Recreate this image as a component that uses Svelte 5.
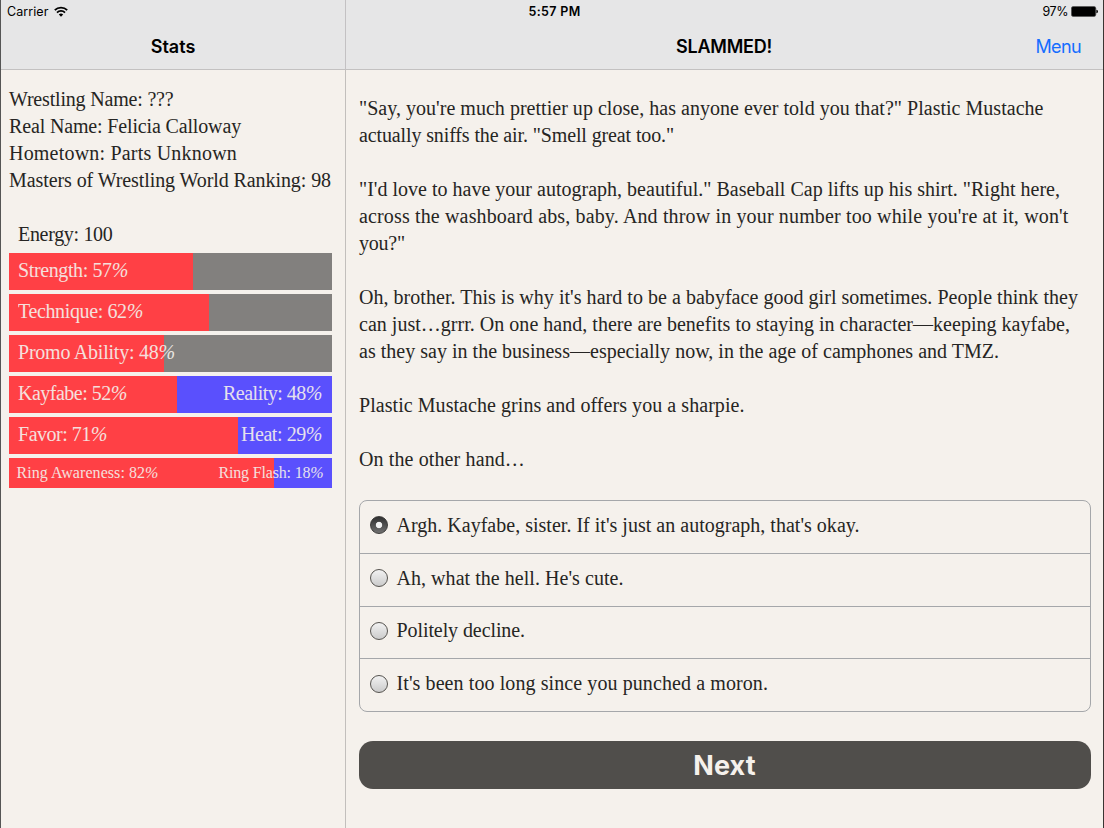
<script>
  const profile = [
    { text: 'Wrestling Name: ???', width: 164.5 },
    { text: 'Real Name: Felicia Calloway', width: 232 },
    { text: 'Hometown: Parts Unknown', width: 228 },
    { text: 'Masters of Wrestling World Ranking: 98', width: 322 }
  ];

  const bars = [
    { name: 'Strength', value: 57, width: 110 },
    { name: 'Technique', value: 62, width: 125 },
    { name: 'Promo Ability', value: 48, width: 157 },
    { name: 'Kayfabe', value: 52, width: 109, opposite: 'Reality', oppositeWidth: 99 },
    { name: 'Favor', value: 71, width: 89, opposite: 'Heat', oppositeWidth: 81 },
    { name: 'Ring Awareness', value: 82, width: 142, opposite: 'Ring Flash', oppositeWidth: 105, small: true }
  ];

  const story = [
    [
      { text: `"Say, you're much prettier up close, has anyone ever told you that?" Plastic Mustache`, width: 684.5 },
      { text: `actually sniffs the air. "Smell great too."`, width: 315 }
    ],
    [
      { text: `"I'd love to have your autograph, beautiful." Baseball Cap lifts up his shirt. "Right here,`, width: 701 },
      { text: `across the washboard abs, baby. And throw in your number too while you're at it, won't`, width: 709.5 },
      { text: `you?"`, width: 46 }
    ],
    [
      { text: `Oh, brother. This is why it's hard to be a babyface good girl sometimes. People think they`, width: 719 },
      { text: `can just…grrr. On one hand, there are benefits to staying in character—keeping kayfabe,`, width: 711 },
      { text: `as they say in the business—especially now, in the age of camphones and TMZ.`, width: 640 }
    ],
    [{ text: 'Plastic Mustache grins and offers you a sharpie.', width: 385.5 }],
    [{ text: 'On the other hand…', width: 166 }]
  ];

  const options = [
    { text: `Argh. Kayfabe, sister. If it's just an autograph, that's okay.`, width: 463 },
    { text: `Ah, what the hell. He's cute.`, width: 227 },
    { text: 'Politely decline.', width: 128.5 },
    { text: `It's been too long since you punched a moron.`, width: 371.5 }
  ];

  let selected = $state(0);

  // spread the letters so that the text takes the given width
  function fit(node, width) {
    const natural = node.getBoundingClientRect().width;
    node.style.letterSpacing = (width - natural) / node.textContent.length + 'px';
  }
</script>

<div class="screen">
  <header>
    <div class="status">
      <div class="carrier">
        <span use:fit={41.5}>Carrier</span>
        <svg width="14" height="11" viewBox="0 0 14 11" fill="none" stroke="#000" stroke-width="1.8">
          <path d="M.8 4.1a8.8 8.8 0 0 1 12.4 0" />
          <path d="M3 6.6a5.6 5.6 0 0 1 8 0" />
          <path d="M7 10.8 4.8 8.5a3.1 3.1 0 0 1 4.4 0z" fill="#000" stroke="none" />
        </svg>
      </div>
      <div class="time"><span use:fit={52}>5:57 PM</span></div>
      <div class="battery">
        <span use:fit={25.5}>97%</span>
        <svg width="27" height="11" viewBox="0 0 27 11">
          <rect x=".4" y=".5" width="24.4" height="10" rx="1.8" fill="#000" stroke="#555" stroke-width=".7" />
          <path d="M25.4 3.8q1.6.2 1.6 1.7t-1.6 1.7z" />
        </svg>
      </div>
    </div>
    <div class="nav">
      <h1 class="left"><span use:fit={44.5}>Stats</span></h1>
      <h1 class="right"><span use:fit={96}>SLAMMED!</span></h1>
      <button class="menu"><span use:fit={45.5}>Menu</span></button>
    </div>
  </header>

  <div class="panes">
    <aside>
      {#each profile as line}
        <div class="line"><span use:fit={line.width}>{line.text}</span></div>
      {/each}
      <div class="line energy"><span use:fit={94.5}>Energy: 100</span></div>

      <div class="bars">
        {#each bars as bar}
          <div class="bar" class:opposed={bar.opposite} class:small={bar.small}>
            <div class="fill" style="width: {bar.value}%"></div>
            <div class="labels">
              <span use:fit={bar.width}>{bar.name}: {bar.value}<i>%</i></span>
              {#if bar.opposite}
                <span use:fit={bar.oppositeWidth}>{bar.opposite}: {100 - bar.value}<i>%</i></span>
              {/if}
            </div>
          </div>
        {/each}
      </div>
    </aside>

    <main>
      {#each story as paragraph}
        <p>
          {#each paragraph as line}
            <span class="line"><span use:fit={line.width}>{line.text}</span></span>
          {/each}
        </p>
      {/each}

      <div class="options">
        {#each options as option, i}
          <label>
            <input type="radio" name="choice" value={i} bind:group={selected} />
            <span use:fit={option.width}>{option.text}</span>
          </label>
        {/each}
      </div>

      <button class="next"><span use:fit={62.5}>Next</span></button>
    </main>
  </div>
</div>

<style>
  :global(body) {
    margin: 0;
    background: #f5f1ec;
  }
  .screen {
    box-sizing: border-box;
    display: flex;
    flex-direction: column;
    width: 1104px;
    height: 828px;
    overflow: hidden;
    border-left: 1px solid #555;
    border-right: 1px solid #3a3532;
    background: #f5f1ec;
    color: #262523;
    font-family: Palatino, "Liberation Serif", serif;
    font-size: 20px;
    line-height: 27px;
    white-space: nowrap;
  }
  header {
    box-sizing: border-box;
    height: 70px;
    border-bottom: 1px solid #c3c1c1;
    background: linear-gradient(to right, transparent 344px, #c3c1c3 344px, #c3c1c3 345px, transparent 345px), #e6e6e7;
    color: #000;
    font-family: Inter, sans-serif;
  }
  .status {
    display: grid;
    grid-template-columns: 1fr auto 1fr;
    height: 23px;
    line-height: 23px;
    font-size: 12.5px;
  }
  .carrier,
  .battery {
    display: flex;
    align-items: center;
  }
  .carrier {
    gap: 5px;
    padding-left: 6px;
  }
  .battery {
    justify-content: flex-end;
    gap: 3px;
    padding-right: 5px;
  }
  .time {
    padding-left: 5px;
    font-weight: 600;
  }
  .nav {
    display: grid;
    grid-template-columns: 344px 1fr;
    align-items: center;
    height: 46px;
  }
  h1 {
    grid-row: 1;
    margin: 0;
    font-size: 18px;
    font-weight: 600;
    text-align: center;
  }
  .menu {
    grid-row: 1;
    grid-column: 2;
    justify-self: end;
    margin-right: 22px;
    padding: 0;
    border: 0;
    background: none;
    color: #156dff;
    font: 18px/27px Inter, sans-serif;
  }
  .right {
    grid-column: 2;
  }
  .panes {
    display: flex;
    flex: 1;
  }
  aside {
    box-sizing: border-box;
    width: 345px;
    padding: 16px 13px 0 8px;
    border-right: 1px solid #c2bfbc;
  }
  .line {
    display: block;
  }
  .energy {
    margin-top: 27px;
    padding-left: 9px;
  }
  .bars {
    display: flex;
    flex-direction: column;
    gap: 4px;
    margin-top: 5px;
  }
  .bar {
    position: relative;
    height: 37px;
    background: #82807e;
    color: #f5f1ec;
  }
  .opposed {
    background: #5a50fd;
  }
  .fill {
    height: 100%;
    background: #ff4045;
  }
  .labels {
    position: absolute;
    inset: 0;
    display: flex;
    justify-content: space-between;
    padding: 0 10px 0 9px;
    line-height: 35px;
    opacity: 0.9;
  }
  .small {
    height: 30px;
    font-size: 16px;
  }
  .small .labels {
    padding: 0 8.5px 0 7.5px;
    line-height: 29px;
  }
  main {
    flex: 1;
    padding: 25px 12px 0 13px;
  }
  p {
    margin: 0 0 27px;
  }
  .options {
    box-sizing: border-box;
    height: 212px;
    margin-top: 27px;
    display: flex;
    flex-direction: column;
    border: 1px solid #a5a7aa;
    border-radius: 8px;
  }
  label {
    display: flex;
    flex: 1;
    align-items: center;
    gap: 8.5px;
    padding: 0 0 3px 10px;
  }
  label + label {
    border-top: 1px solid #a5a7aa;
  }
  input {
    appearance: none;
    box-sizing: border-box;
    width: 18px;
    height: 18px;
    margin: 0;
    border: 1.5px solid #55534f;
    border-radius: 50%;
    background: linear-gradient(#f2f2f2, #cbcbcb);
  }
  input:checked {
    border-color: #3b3a39;
    background: radial-gradient(circle, #f2f2f2 2.8px, transparent 3.6px), linear-gradient(#303030, #707070);
  }
  .next {
    display: block;
    width: 100%;
    height: 48px;
    margin-top: 29px;
    padding: 0 1px 0 0;
    border: 0;
    border-radius: 14px;
    background: #504e4b;
    color: #f5f1ec;
    font: bold 27px Inter, sans-serif;
  }
</style>
